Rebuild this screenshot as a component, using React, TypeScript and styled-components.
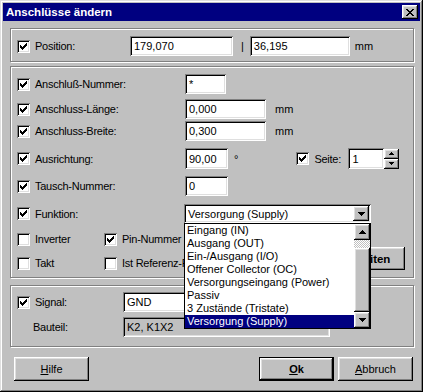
import React from 'react'
import styled, { createGlobalStyle, css } from 'styled-components'

const GlobalStyle = createGlobalStyle`
  html, body {
    margin: 0;
    padding: 0;
    background: #c0c0c0;
  }
  body {
    font-family: "Liberation Sans", Arial, sans-serif;
    font-size: 11px;
    color: #000;
  }
`

const raised = css`
  box-shadow: inset -1px -1px #000, inset 1px 1px #fff, inset -2px -2px #808080, inset 2px 2px #dfdfdf;
`

const sunken = css`
  box-shadow: inset 1px 1px #808080, inset -1px -1px #fff, inset 2px 2px #000, inset -2px -2px #dfdfdf;
`

const Window = styled.div`
  width: 423px;
  height: 392px;
  box-sizing: border-box;
  padding: 3px;
  background: #c0c0c0;
  box-shadow: inset -1px -1px #000, inset 1px 1px #dfdfdf, inset -2px -2px #808080, inset 2px 2px #fff;
  display: flex;
  flex-direction: column;
`

const TitleBar = styled.div`
  height: 18px;
  background: #000080;
  display: flex;
  align-items: center;
  justify-content: space-between;
  padding: 0 2px 0 3px;
`

const Title = styled.span`
  color: #fff;
  font-weight: bold;
  font-size: 11.5px;
`

const CloseBtn = styled.div`
  width: 16px;
  height: 14px;
  background: #c0c0c0;
  display: flex;
  align-items: center;
  justify-content: center;
  ${raised}
`

const Body = styled.div`
  display: flex;
  flex-direction: column;
  padding: 7px 6px 0 7px;
`

const GroupBox = styled.div<{ $h: number; $mt?: number }>`
  position: relative;
  box-sizing: border-box;
  height: ${p => p.$h}px;
  margin-top: ${p => p.$mt ?? 0}px;
  border: 1px solid #808080;
  box-shadow: 1px 1px 0 #fff, inset 1px 1px 0 #fff;
  padding: 0 8px 0 6px;
  display: flex;
  flex-direction: column;
`

const Row = styled.div<{ $h?: number; $mt?: number }>`
  display: flex;
  align-items: center;
  height: ${p => p.$h ?? 20}px;
  margin-top: ${p => p.$mt ?? 0}px;
  white-space: nowrap;
`

const LabelCell = styled.div<{ $w: number; $indent?: number }>`
  width: ${p => p.$w}px;
  flex: none;
  display: flex;
  align-items: center;
  padding-left: ${p => p.$indent ?? 0}px;
  box-sizing: border-box;
  letter-spacing: -0.25px;
`

const Box = styled.div`
  width: 13px;
  height: 13px;
  flex: none;
  background: #fff;
  display: flex;
  align-items: center;
  justify-content: center;
  ${sunken}
`

const LabelText = styled.span`
  margin-left: 5px;
  letter-spacing: -0.25px;
`

const Field = styled.div<{ $w: number; $gray?: boolean; $h?: number }>`
  width: ${p => p.$w}px;
  height: ${p => p.$h ?? 20}px;
  box-sizing: border-box;
  flex: none;
  background: ${p => (p.$gray ? '#c0c0c0' : '#fff')};
  padding-left: 4px;
  display: flex;
  align-items: center;
  ${sunken}
`

const Unit = styled.span<{ $ml: number }>`
  margin-left: ${p => p.$ml}px;
`

const SpinWrap = styled.div`
  display: flex;
  flex-direction: column;
`

const SpinBtn = styled.div`
  width: 15px;
  height: 10px;
  background: #c0c0c0;
  display: flex;
  align-items: center;
  justify-content: center;
  ${raised}
`

const SelectWrap = styled.div`
  position: relative;
  margin-left: -1px;
`

const Select = styled.div`
  width: 187px;
  height: 19px;
  box-sizing: border-box;
  background: #fff;
  display: flex;
  align-items: center;
  padding: 0 2px 0 4px;
  ${sunken}
`

const SelectText = styled.span`
  flex: 1;
`

const ArrowBtn = styled.div<{ $h?: number }>`
  width: 16px;
  height: ${p => p.$h ?? 15}px;
  flex: none;
  background: #c0c0c0;
  display: flex;
  align-items: center;
  justify-content: center;
  ${raised}
`

const DropList = styled.div`
  position: absolute;
  left: 0;
  top: 19px;
  z-index: 5;
  width: 187px;
  height: 106px;
  box-sizing: border-box;
  border: 1px solid #000;
  background: #fff;
  display: flex;
`

const Items = styled.div`
  flex: 1;
  display: flex;
  flex-direction: column;
`

const Item = styled.div<{ $sel?: boolean }>`
  height: 13px;
  line-height: 13px;
  padding-left: 2px;
  background: ${p => (p.$sel ? '#000080' : 'transparent')};
  color: ${p => (p.$sel ? '#fff' : '#000')};
`

const ScrollBar = styled.div`
  width: 16px;
  display: flex;
  flex-direction: column;
`

const Track = styled.div<{ $h: number }>`
  height: ${p => p.$h}px;
  background-color: #c0c0c0;
  background-image: conic-gradient(#fff 25%, #c0c0c0 0 50%, #fff 0 75%, #c0c0c0 0);
  background-size: 2px 2px;
`

const Thumb = styled.div<{ $h: number }>`
  height: ${p => p.$h}px;
  background: #c0c0c0;
  ${raised}
`

const Bottom = styled.div`
  display: flex;
  margin-top: 8px;
`

const BottomLeft = styled.div`
  display: flex;
  flex-direction: column;
`

const Button = styled.div<{ $default?: boolean; $bold?: boolean; $w?: number }>`
  width: ${p => p.$w ?? 75}px;
  height: 24px;
  box-sizing: border-box;
  background: #c0c0c0;
  display: flex;
  align-items: center;
  justify-content: center;
  font-weight: ${p => (p.$bold ? 'bold' : 'normal')};
  ${raised}
  ${p =>
    p.$default &&
    css`
      border: 1px solid #000;
    `}
`

const SideButton = styled(Button)`
  margin-left: auto;
  align-self: flex-end;
  margin-bottom: 1px;
  height: 23px;
  padding-right: 6px;
  font-size: 11.5px;
`

const ButtonRow = styled.div`
  display: flex;
  align-items: center;
  margin-top: 10px;
  padding: 0 1px 0 4px;
`

const Spacer = styled.div`
  flex: 1;
`

const Gap = styled.div<{ $w: number }>`
  width: ${p => p.$w}px;
  flex: none;
`

const Ul = styled.span`
  text-decoration: underline;
`

function Check({ on }: { on?: boolean }) {
  return (
    <Box>
      {on && (
        <svg width="7" height="7" viewBox="0 0 7 7" shapeRendering="crispEdges">
          <path d="M0 2h1v3H0zM1 3h1v3H1zM2 4h1v3H2zM3 3h1v3H3zM4 2h1v3H4zM5 1h1v3H5zM6 0h1v3H6z" fill="#000" />
        </svg>
      )}
    </Box>
  )
}

function Arrow({ up }: { up?: boolean }) {
  return (
    <svg width="7" height="4" viewBox="0 0 7 4" shapeRendering="crispEdges">
      <path d={up ? 'M3 0h1v1H3zM2 1h3v1H2zM1 2h5v1H1zM0 3h7v1H0z' : 'M0 0h7v1H0zM1 1h5v1H1zM2 2h3v1H2zM3 3h1v1H3z'} fill="#000" />
    </svg>
  )
}

function SmallArrow({ up }: { up?: boolean }) {
  return (
    <svg width="5" height="3" viewBox="0 0 5 3" shapeRendering="crispEdges">
      <path d={up ? 'M2 0h1v1H2zM1 1h3v1H1zM0 2h5v1H0z' : 'M0 0h5v1H0zM1 1h3v1H1zM2 2h1v1H2z'} fill="#000" />
    </svg>
  )
}

const functions = [
  'Eingang (IN)',
  'Ausgang (OUT)',
  'Ein-/Ausgang (I/O)',
  'Offener Collector (OC)',
  'Versorgungseingang (Power)',
  'Passiv',
  '3 Zustände (Tristate)',
  'Versorgung (Supply)',
]

export default function App() {
  return (
    <>
      <GlobalStyle />
      <Window>
        <TitleBar>
          <Title>Anschlüsse ändern</Title>
          <CloseBtn>
            <svg width="8" height="7" viewBox="0 0 8 7" shapeRendering="crispEdges">
              <path d="M0 0h2v1H0zM6 0h2v1H6zM1 1h2v1H1zM5 1h2v1H5zM2 2h4v1H2zM3 3h2v1H3zM2 4h4v1H2zM1 5h2v1H1zM5 5h2v1H5zM0 6h2v1H0zM6 6h2v1H6z" fill="#000" />
            </svg>
          </CloseBtn>
        </TitleBar>

        <Body>
          <GroupBox $h={34}>
            <Row $mt={7}>
              <LabelCell $w={113}>
                <Check on />
                <LabelText>Position:</LabelText>
              </LabelCell>
              <Field $w={103}>179,070</Field>
              <Unit $ml={8}>|</Unit>
              <Field $w={100} style={{ marginLeft: 6 }}>36,195</Field>
              <Unit $ml={5}>mm</Unit>
            </Row>
          </GroupBox>

          <GroupBox $h={212} $mt={4}>
            <Row $mt={7}>
              <LabelCell $w={168}>
                <Check on />
                <LabelText>Anschluß-Nummer:</LabelText>
              </LabelCell>
              <Field $w={41}>*</Field>
            </Row>
            <Row $mt={5}>
              <LabelCell $w={168}>
                <Check on />
                <LabelText>Anschluss-Länge:</LabelText>
              </LabelCell>
              <Field $w={81}>0,000</Field>
              <Unit $ml={9}>mm</Unit>
            </Row>
            <Row $mt={2}>
              <LabelCell $w={168}>
                <Check on />
                <LabelText>Anschluss-Breite:</LabelText>
              </LabelCell>
              <Field $w={81}>0,300</Field>
              <Unit $ml={9}>mm</Unit>
            </Row>
            <Row $mt={7} $h={21}>
              <LabelCell $w={168}>
                <Check on />
                <LabelText>Ausrichtung:</LabelText>
              </LabelCell>
              <Field $w={43} $h={21}>90,00</Field>
              <Unit $ml={6}>°</Unit>
              <LabelCell $w={52} style={{ marginLeft: 58 }}>
                <Check on />
                <LabelText>Seite:</LabelText>
              </LabelCell>
              <Field $w={36} $h={21}>1</Field>
              <SpinWrap>
                <SpinBtn>
                  <SmallArrow up />
                </SpinBtn>
                <SpinBtn>
                  <SmallArrow />
                </SpinBtn>
              </SpinWrap>
            </Row>
            <Row $mt={7}>
              <LabelCell $w={168}>
                <Check on />
                <LabelText>Tausch-Nummer:</LabelText>
              </LabelCell>
              <Field $w={43}>0</Field>
            </Row>
            <Row $mt={8} $h={19}>
              <LabelCell $w={168}>
                <Check on />
                <LabelText>Funktion:</LabelText>
              </LabelCell>
              <SelectWrap>
                <Select>
                  <SelectText>Versorgung (Supply)</SelectText>
                  <ArrowBtn>
                    <Arrow />
                  </ArrowBtn>
                </Select>
                <DropList>
                  <Items>
                    {functions.map((f, i) => (
                      <Item key={f} $sel={i === functions.length - 1}>
                        {f}
                      </Item>
                    ))}
                  </Items>
                  <ScrollBar>
                    <ArrowBtn $h={16}>
                      <Arrow up />
                    </ArrowBtn>
                    <Track $h={8} />
                    <Thumb $h={64} />
                    <ArrowBtn $h={16}>
                      <Arrow />
                    </ArrowBtn>
                  </ScrollBar>
                </DropList>
              </SelectWrap>
            </Row>
            <Bottom>
              <BottomLeft>
                <Row $h={16}>
                  <LabelCell $w={87}>
                    <Check />
                    <LabelText>Inverter</LabelText>
                  </LabelCell>
                  <Check on />
                  <LabelText>Pin-Nummer anzeigen</LabelText>
                </Row>
                <Row $h={16} $mt={8}>
                  <LabelCell $w={87}>
                    <Check />
                    <LabelText>Takt</LabelText>
                  </LabelCell>
                  <Check />
                  <LabelText>Ist Referenz-Pin</LabelText>
                </Row>
              </BottomLeft>
              <SideButton $bold $w={82}>Alle Seiten</SideButton>
            </Bottom>
          </GroupBox>

          <GroupBox $h={62} $mt={7}>
            <Row $mt={6}>
              <LabelCell $w={106}>
                <Check on />
                <LabelText>Signal:</LabelText>
              </LabelCell>
              <Field $w={207}>GND</Field>
            </Row>
            <Row $mt={5}>
              <LabelCell $w={106} $indent={16}>
                Bauteil:
              </LabelCell>
              <Field $w={207} $gray>K2, K1X2</Field>
            </Row>
          </GroupBox>

          <ButtonRow>
            <Button>
              <span>
                <Ul>H</Ul>ilfe
              </span>
            </Button>
            <Spacer />
            <Button $default $bold>
              <span>
                <Ul>O</Ul>k
              </span>
            </Button>
            <Gap $w={4} />
            <Button>
              <span>
                <Ul>A</Ul>bbruch
              </span>
            </Button>
          </ButtonRow>
        </Body>
      </Window>
    </>
  )
}
